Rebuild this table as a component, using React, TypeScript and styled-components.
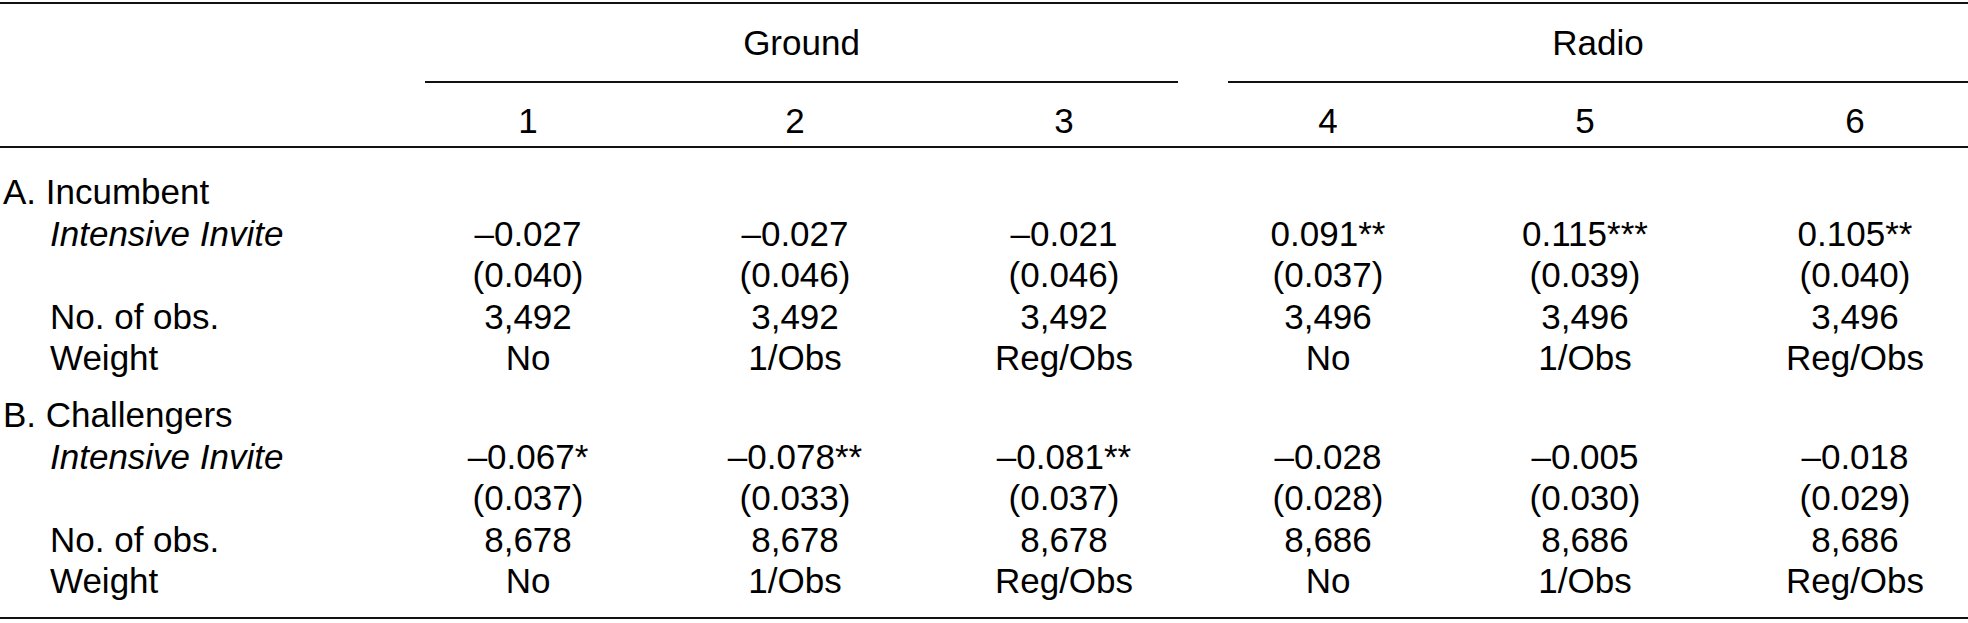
import styled, { createGlobalStyle } from "styled-components";

const GlobalStyle = createGlobalStyle`
    html, body {
        margin: 0;
        padding: 0;
        background: #fff;
    }
    body {
        font-family: "Liberation Sans", Arial, Helvetica, sans-serif;
        color: #000;
    }
`;

// label column + 6 model columns
const COLS = "395px 266px 268px 270px 258px 256px 255px";

const Table = styled.div`
    width: 1968px;
    margin-top: 2px;
    border-top: 2px solid #111;
    border-bottom: 2px solid #111;
    font-size: 35px;
    line-height: 41.5px;
`;

const Head = styled.div`
    display: grid;
    grid-template-columns: ${COLS};
    padding-top: 18px;
`;

const GroupCell = styled.div<{ $from: number; $to: number; $trimL: number; $trimR: number }>`
    grid-column: ${(p) => p.$from} / ${(p) => p.$to};
    margin: 0 ${(p) => p.$trimR}px 0 ${(p) => p.$trimL}px;
    display: flex;
    flex-direction: column;
    align-items: stretch;
    text-align: center;
`;

const GroupRule = styled.div`
    height: 2px;
    margin-top: 17.5px;
    background: #111;
`;

const Cell = styled.div`
    text-align: center;
    white-space: nowrap;

    /* last column sits against the table edge, its text runs a bit further right */
    &:last-child {
        padding-left: 29px;
    }
`;

const NumberRow = styled.div`
    display: grid;
    grid-template-columns: ${COLS};
    padding-top: 17px;
    padding-bottom: 4.5px;
    border-bottom: 2px solid #111;
`;

const Panel = styled.div<{ $last?: boolean; $first?: boolean }>`
    padding-top: ${(p) => (p.$first ? 23 : 15.5)}px;
    padding-bottom: ${(p) => (p.$last ? 15.5 : 0)}px;
`;

const Row = styled.div`
    display: grid;
    grid-template-columns: ${COLS};
    height: 41.5px;
`;

const Label = styled.div<{ $indent?: boolean; $italic?: boolean }>`
    padding-left: ${(p) => (p.$indent ? 50 : 3)}px;
    font-style: ${(p) => (p.$italic ? "italic" : "normal")};
    white-space: nowrap;
`;

type Line = { label: string; italic?: boolean; values: string[] };
type PanelData = { title: string; lines: Line[] };

const panels: PanelData[] = [
    {
        title: "A. Incumbent",
        lines: [
            {
                label: "Intensive Invite",
                italic: true,
                values: ["–0.027", "–0.027", "–0.021", "0.091**", "0.115***", "0.105**"],
            },
            {
                label: "",
                values: ["(0.040)", "(0.046)", "(0.046)", "(0.037)", "(0.039)", "(0.040)"],
            },
            {
                label: "No. of obs.",
                values: ["3,492", "3,492", "3,492", "3,496", "3,496", "3,496"],
            },
            {
                label: "Weight",
                values: ["No", "1/Obs", "Reg/Obs", "No", "1/Obs", "Reg/Obs"],
            },
        ],
    },
    {
        title: "B. Challengers",
        lines: [
            {
                label: "Intensive Invite",
                italic: true,
                values: ["–0.067*", "–0.078**", "–0.081**", "–0.028", "–0.005", "–0.018"],
            },
            {
                label: "",
                values: ["(0.037)", "(0.033)", "(0.037)", "(0.028)", "(0.030)", "(0.029)"],
            },
            {
                label: "No. of obs.",
                values: ["8,678", "8,678", "8,678", "8,686", "8,686", "8,686"],
            },
            {
                label: "Weight",
                values: ["No", "1/Obs", "Reg/Obs", "No", "1/Obs", "Reg/Obs"],
            },
        ],
    },
];

const App = () => {
    return (
        <>
            <GlobalStyle />
            <Table>
                <Head>
                    <GroupCell $from={2} $to={5} $trimL={30} $trimR={21}>
                        <span>Ground</span>
                        <GroupRule />
                    </GroupCell>
                    <GroupCell $from={5} $to={8} $trimL={29} $trimR={0}>
                        <span>Radio</span>
                        <GroupRule />
                    </GroupCell>
                </Head>

                <NumberRow>
                    <Label />
                    {[1, 2, 3, 4, 5, 6].map((n) => (
                        <Cell key={n}>{n}</Cell>
                    ))}
                </NumberRow>

                {panels.map((panel, i) => (
                    <Panel key={panel.title} $first={i === 0} $last={i === panels.length - 1}>
                        <Row>
                            <Label>{panel.title}</Label>
                        </Row>
                        {panel.lines.map((line, j) => (
                            <Row key={j}>
                                <Label $indent $italic={line.italic}>
                                    {line.label}
                                </Label>
                                {line.values.map((v, k) => (
                                    <Cell key={k}>{v}</Cell>
                                ))}
                            </Row>
                        ))}
                    </Panel>
                ))}
            </Table>
        </>
    );
};

export default App;
